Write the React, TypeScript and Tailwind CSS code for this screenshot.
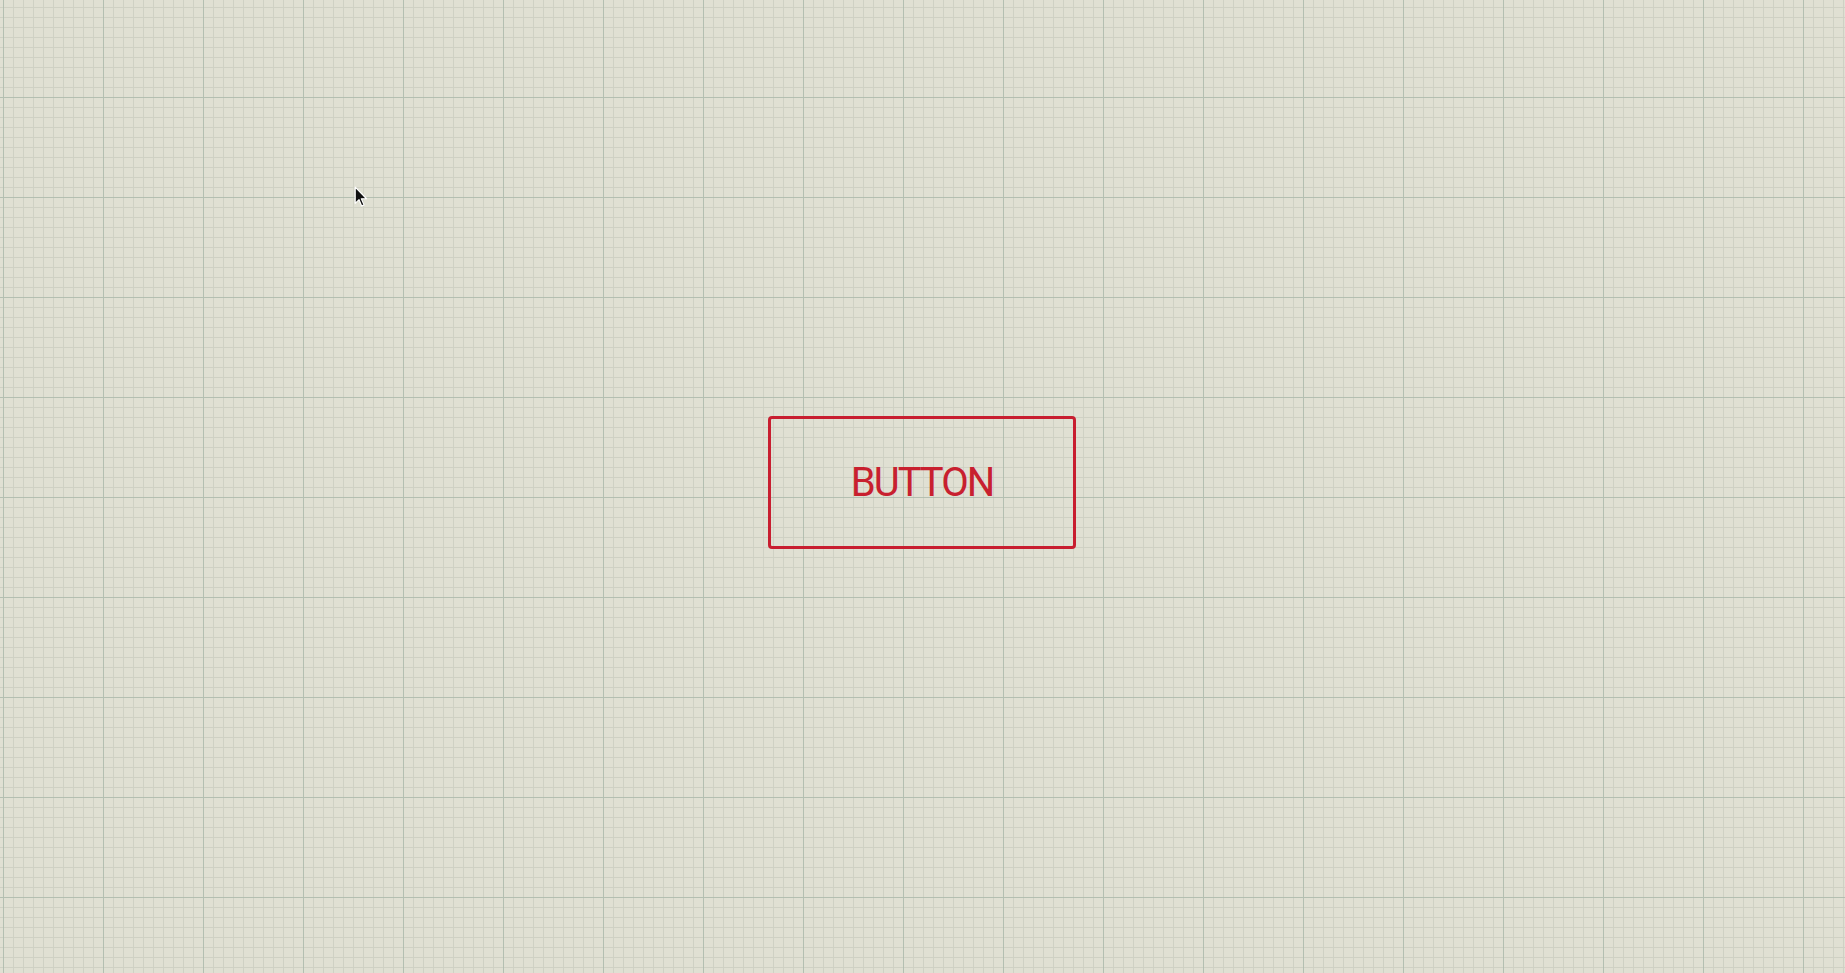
export default function App() {
  return (
    <div className="relative h-[973px] w-full overflow-hidden bg-[#e0e0d3] [background-image:linear-gradient(to_right,#b4bfb1_1px,transparent_1px),linear-gradient(to_bottom,#b4bfb1_1px,transparent_1px),linear-gradient(to_right,#cfd1c4_1px,transparent_1px),linear-gradient(to_bottom,#cfd1c4_1px,transparent_1px)] [background-size:100px_100px,100px_100px,10px_10px,10px_10px] [background-position:3px_0,0_97px,3px_0,0_7px]">
      {/* canvas content */}
      <div className="flex justify-center pr-px pt-[416px]">
        <button className="flex h-[133px] w-[308px] items-center justify-center rounded-[4px] border-[3px] border-[#c81e30] bg-transparent pt-[1px]">
          <span className="font-['Roboto',sans-serif] text-[40px] leading-none tracking-[-2px] text-[#c8202f]">
            BUTTON
          </span>
        </button>
      </div>

      {/* mouse pointer */}
      <svg
        className="absolute left-[354px] top-[186px]"
        width="14"
        height="22"
        viewBox="0 0 12 19"
      >
        <path
          d="M1 1 L1 15 L4.3 11.8 L6.6 17.2 L8.6 16.3 L6.3 11 L10.8 11 Z"
          fill="#111"
          stroke="#fff"
          strokeWidth="1"
          strokeLinejoin="round"
        />
      </svg>
    </div>
  );
}
